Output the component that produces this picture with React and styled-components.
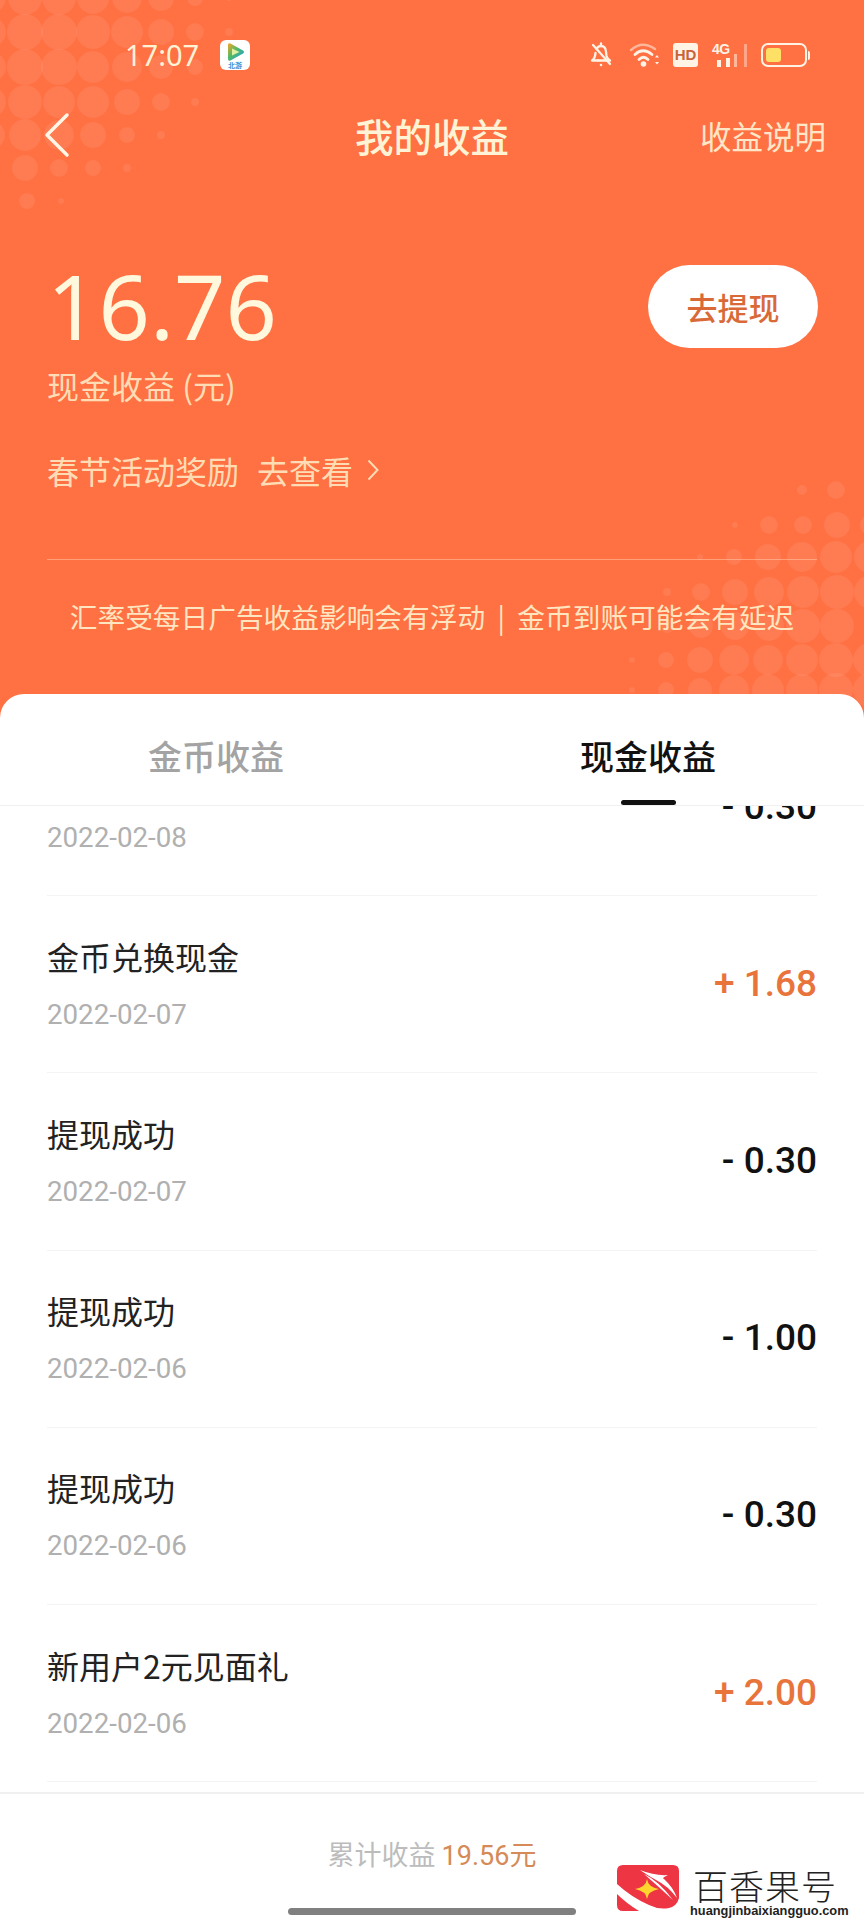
import React from 'react';
import styled, { createGlobalStyle } from 'styled-components';

const CREAM = '#fff3d6';
const ORANGE = '#ff7043';
const ICON = '#fff3e6';

const GlobalStyle = createGlobalStyle`
  html, body {
    margin: 0;
    padding: 0;
    background: #fff;
  }
  * {
    box-sizing: border-box;
  }
`;

const Page = styled.div`
  position: relative;
  width: 864px;
  height: 1920px;
  overflow: hidden;
  display: flex;
  flex-direction: column;
  background: ${ORANGE};
  font-family: "Noto Sans CJK SC", "Noto Sans", sans-serif;
`;
const Dots = styled.svg`
  position: absolute;
  top: 0;
  left: 0;
  pointer-events: none;
`;
const Header = styled.header`
  position: relative;
  height: 694px;
  flex: none;
  display: flex;
  flex-direction: column;
`;
const StatusBar = styled.div`
  height: 107px;
  padding: 3px 54px 0 125px;
  display: flex;
  align-items: center;
  justify-content: space-between;
`;
const StatusLeft = styled.div`
  display: flex;
  align-items: center;
  gap: 21px;
`;
const Time = styled.span`
  font-family: "Noto Sans", sans-serif;
  font-size: 29px;
  line-height: 36px;
  color: ${CREAM};
`;
const StatusIcons = styled.div`
  display: flex;
  align-items: center;
`;
const WifiIcon = styled.svg`
  margin-left: 17px;
`;
const Nav = styled.nav`
  height: 56px;
  padding: 0 38px;
  display: grid;
  grid-template-columns: 1fr auto 1fr;
  align-items: center;
`;
const BackIcon = styled.svg`
  margin-left: 6px;
`;
const NavTitle = styled.h1`
  margin: 0;
  font-size: 38.5px;
  line-height: 56px;
  font-weight: 500;
  color: ${CREAM};
`;
const NavLink = styled.span`
  justify-self: end;
  font-size: 31.5px;
  line-height: 44px;
  color: ${CREAM};
  opacity: 0.9;
`;
const Summary = styled.section`
  margin-top: 97px;
  padding: 0 46px 0 47px;
  display: flex;
  justify-content: space-between;
  align-items: flex-start;
`;
const Amount = styled.div`
  font-family: "Noto Sans", sans-serif;
  font-size: 90px;
  line-height: 90px;
  color: #fff8dc;
`;
const WithdrawButton = styled.button`
  width: 170px;
  height: 83px;
  margin-top: 5px;
  border: none;
  border-radius: 42px;
  background: #fff;
  font-family: inherit;
  font-size: 31px;
  font-weight: 500;
  color: #d96a38;
`;
const AmountLabel = styled.div`
  margin: 15px 0 0 47px;
  font-size: 32px;
  line-height: 40px;
  color: #ffdcb4;
`;
const Promo = styled.div`
  margin: 43px 0 0 47px;
  display: flex;
  align-items: center;
  font-size: 32px;
  line-height: 44px;
  color: #ffdcb4;
`;
const PromoLink = styled.span`
  margin-left: 18px;
`;
const PromoArrow = styled.svg`
  margin-left: 14px;
`;
const Divider = styled.div`
  margin: 67px 47px 0;
  height: 1px;
  background: rgba(255, 232, 200, 0.4);
`;
const Notice = styled.p`
  margin: 36px 0 0;
  font-size: 27.7px;
  line-height: 40px;
  text-align: center;
  white-space: pre;
  color: #ffe6c0;
`;
const Sheet = styled.main`
  position: relative;
  flex: 1;
  min-height: 0;
  display: flex;
  flex-direction: column;
  border-radius: 24px 24px 0 0;
  background: #fff;
`;
const Tabs = styled.div`
  height: 112px;
  flex: none;
  display: grid;
  grid-template-columns: 1fr 1fr;
  border-bottom: 1px solid #f0f0f0;
`;
const Tab = styled.div`
  position: relative;
  padding-top: 37px;
  text-align: center;
  font-size: 34px;
  line-height: 50px;
  font-weight: 500;
  color: ${(props) => (props.$active ? '#111' : '#a3a3a3')};
  ${(props) =>
    props.$active &&
    `&::after {
      content: '';
      position: absolute;
      left: 50%;
      bottom: 0;
      width: 55px;
      height: 5px;
      margin-left: -27px;
      border-radius: 3px;
      background: #111;
    }`}
`;
const List = styled.div`
  flex: 1;
  min-height: 0;
  overflow: hidden;
`;
// the list is scrolled: the first row sits partly under the tabs
const ListInner = styled.div`
  margin-top: -87px;
  padding: 0 47px;
`;
const Row = styled.div`
  height: 177.2px;
  padding-bottom: 2px;
  display: flex;
  align-items: center;
  justify-content: space-between;
  border-bottom: 1px solid #f4f4f4;
`;
const RowTitle = styled.div`
  min-height: 44px;
  font-size: 32px;
  line-height: 44px;
  color: #222;
`;
const RowDate = styled.div`
  margin-top: 19px;
  font-family: Roboto, sans-serif;
  font-size: 27.7px;
  line-height: 36px;
  color: #b0b0b0;
`;
const RowAmount = styled.div`
  font-family: Roboto, sans-serif;
  font-size: 37px;
  font-weight: 500;
  color: ${(props) => (props.$income ? '#e8743c' : '#111')};
  white-space: pre;
`;
const Footer = styled.footer`
  position: relative;
  height: 128px;
  flex: none;
  padding-top: 39px;
  border-top: 2px solid #f0f0f0;
  text-align: center;
  font-size: 27px;
  line-height: 42px;
  color: #bcbcbc;
`;
const FooterTotal = styled.span`
  margin-left: 6px;
  color: #d58a58;
`;
const FooterNumber = styled.span`
  font-family: Roboto, sans-serif;
`;
const HomeBar = styled.div`
  position: absolute;
  left: 288px;
  bottom: 5px;
  width: 288px;
  height: 7px;
  border-radius: 4px;
  background: #808080;
`;
const Watermark = styled.div`
  position: absolute;
  right: 10px;
  bottom: 0;
  height: 55px;
  display: flex;
  align-items: flex-start;
  gap: 11px;
  color: #222;
`;
const WatermarkText = styled.div`
  display: flex;
  flex-direction: column;
  align-items: flex-start;
  width: 164px;
`;
const WatermarkName = styled.div`
  margin: 2px 0 0 3px;
  font-size: 35px;
  line-height: 36px;
  font-weight: 300;
  letter-spacing: 1px;
`;
const WatermarkUrl = styled.div`
  font-family: "Liberation Sans", sans-serif;
  font-size: 12.8px;
  line-height: 16px;
  font-weight: 700;
  white-space: nowrap;
`;

// radii per row, x positions run on a 34px grid
const LEFT_DOTS = [
  { y: -2, x: -9, radii: [15, 17, 17, 16, 15, 13, 8, 3] },
  { y: 32, x: -9, radii: [15, 18, 18, 17, 16, 13, 9, 4] },
  { y: 67, x: -9, radii: [15, 18, 18, 16, 15, 12, 8] },
  { y: 102, x: -9, radii: [15, 17, 16, 16, 13, 9, 4] },
  { y: 135, x: -9, radii: [14, 16, 15, 13, 8, 4] },
  { y: 168, x: -9, radii: [9, 13, 9, 8, 4] },
  { y: 201, x: 27, radii: [8, 3] },
];
const RIGHT_DOTS = [
  { y: 490, x: 802, radii: [5, 9, 4] },
  { y: 525, x: 735, radii: [3, 9, 9, 13, 11] },
  { y: 557, x: 700, radii: [3, 8, 13, 15, 16, 16] },
  { y: 592, x: 667, radii: [4, 9, 13, 15, 16, 17, 17] },
  { y: 626, x: 667, radii: [7, 12, 14, 15, 17, 17] },
  { y: 660, x: 632, radii: [3, 8, 13, 15, 15, 16, 17, 17] },
  { y: 690, x: 632, radii: [3, 8, 12, 15, 16, 16, 17, 17] },
];

const DotField = ({ rows }) =>
  rows.flatMap((row) =>
    row.radii.map((r, i) => (
      <circle key={`${row.y}-${i}`} cx={row.x + i * 34} cy={row.y} r={r} fill="#fff" fillOpacity="0.08" />
    ))
  );

const AppIcon = () => (
  <svg width="30" height="30" viewBox="0 0 30 30">
    <defs>
      <linearGradient id="playOuter" x1="0" y1="0" x2="1" y2="1">
        <stop offset="0" stopColor="#f6a623" />
        <stop offset="0.45" stopColor="#4fb96a" />
        <stop offset="1" stopColor="#1f9be6" />
      </linearGradient>
    </defs>
    <rect width="30" height="30" rx="6" fill="#fff" />
    <path d="M8 5 Q8 2.500 10.500 3.500 L23 10.500 Q25 12 23 13.500 L10.500 20.500 Q8 21.500 8 19 Z" fill="url(#playOuter)" />
    <path d="M12 8.500 L19.500 12 L12 15.500 Z" fill="#dff0a0" />
    <text x="15" y="28" fontSize="7" textAnchor="middle" fontWeight="700" fill="#3c8fd6" fontFamily="Noto Sans CJK SC, sans-serif">北游</text>
  </svg>
);

const BellOff = () => (
  <svg width="22" height="26" viewBox="0 0 22 26" fill="none" stroke={ICON} strokeWidth="2.300" strokeLinecap="round" strokeLinejoin="round">
    <path d="M6.500 7 Q8 4 11 4 Q15.500 4 16 9.500 L16.500 14 Q17 16.500 20 18.500 L8 18.500" />
    <path d="M5.500 11 L5 14 Q4.500 17 2 18.500 L8 18.500" />
    <path d="M3 3 L20 22" />
    <path d="M11 1.500 V4" />
    <circle cx="11" cy="23" r="1.300" fill={ICON} stroke="none" />
  </svg>
);

const Wifi = () => (
  <WifiIcon width="32" height="26" viewBox="0 0 32 26" fill="none" strokeLinecap="round">
    <path d="M2 8 Q13 -2 26 7" stroke="#ffb79c" strokeWidth="2.400" />
    <path d="M6 12.500 Q14 5 23 12.500" stroke={ICON} strokeWidth="2.800" />
    <path d="M10 17.500 Q14.500 13 19 17.500" stroke={ICON} strokeWidth="2.800" />
    <circle cx="14.500" cy="22" r="2.800" fill={ICON} />
    <path d="M26 15.500 L28 13 L30 15.500 Z M26 20 L28 22.500 L30 20 Z" fill={ICON} />
  </WifiIcon>
);

const HdBadge = styled.span`
  width: 25px;
  height: 24px;
  margin-left: 12px;
  border-radius: 3px;
  background: ${ICON};
  font-family: "Liberation Sans", sans-serif;
  font-size: 15px;
  line-height: 24px;
  font-weight: 700;
  text-align: center;
  color: #c9643a;
`;
const Signal = styled.div`
  position: relative;
  width: 36px;
  height: 24px;
  margin-left: 14px;
`;
const SignalLabel = styled.span`
  position: absolute;
  top: -1px;
  left: 0;
  font-family: "Liberation Sans", sans-serif;
  font-size: 14px;
  line-height: 14px;
  font-weight: 700;
  letter-spacing: -0.5px;
  color: ${ICON};
`;
const SignalBars = styled.svg`
  position: absolute;
  top: 0;
  left: 0;
`;
const Battery = styled.div`
  width: 46px;
  height: 24px;
  margin-left: 13px;
  padding: 3px;
  border: 2px solid ${ICON};
  border-radius: 7px;
`;
const BatteryFill = styled.div`
  width: 15px;
  height: 100%;
  border-radius: 3px;
  background: #ffe066;
`;
const BatteryCap = styled.div`
  width: 2px;
  height: 9px;
  margin-left: 1px;
  border-radius: 0 2px 2px 0;
  background: ${ICON};
`;

const LogoMark = () => (
  <svg width="62" height="46" viewBox="0 0 62 46">
    <path d="M6 0 H56 Q62 0 62 6 V33 Q60 41 52 43 Q42 45 32 40 Q14 32 0 19 V6 Q0 0 6 0 Z" fill="#ed3544" />
    <path d="M0 29 Q9 38 22 46 H6 Q0 46 0 40 Z" fill="#ed3544" />
    <path d="M23 5 Q38 11 51 10 Q44 13 47 14 Q56 22 60 33 Q51 21 39 15 Q30 10 23 5 Z" fill="#fff" />
    <path d="M27 9 Q42 16 56 35 Q42 22 27 9 Z" fill="#fff" />
    <path d="M30 14 Q31 22 42 24 Q31 26 30 34 Q29 26 18 24 Q29 22 30 14 Z" fill="#ffd52e" />
  </svg>
);

const ROWS = [
  { title: '', date: '2022-02-08', amount: '- 0.30' },
  { title: '金币兑换现金', date: '2022-02-07', amount: '+ 1.68', income: true },
  { title: '提现成功', date: '2022-02-07', amount: '- 0.30' },
  { title: '提现成功', date: '2022-02-06', amount: '- 1.00' },
  { title: '提现成功', date: '2022-02-06', amount: '- 0.30' },
  { title: '新用户2元见面礼', date: '2022-02-06', amount: '+ 2.00', income: true },
  { title: '', date: '', amount: '' },
];

const App = () => (
  <Page>
    <GlobalStyle />
    <Dots width="864" height="720" viewBox="0 0 864 720">
      <DotField rows={LEFT_DOTS} />
      <DotField rows={RIGHT_DOTS} />
    </Dots>
    <Header>
      <StatusBar>
        <StatusLeft>
          <Time>17:07</Time>
          <AppIcon />
        </StatusLeft>
        <StatusIcons>
          <BellOff />
          <Wifi />
          <HdBadge>HD</HdBadge>
          <Signal>
            <SignalLabel>4G</SignalLabel>
            <SignalBars width="36" height="24" viewBox="0 0 36 24">
              <rect x="5" y="17" width="4" height="7" fill={ICON} />
              <rect x="14" y="15" width="4" height="9" fill={ICON} />
              <rect x="22" y="11" width="3" height="13" fill="#ffb79c" />
              <rect x="32" y="1" width="3" height="23" fill="#ffa589" />
            </SignalBars>
          </Signal>
          <Battery>
            <BatteryFill />
          </Battery>
          <BatteryCap />
        </StatusIcons>
      </StatusBar>
      <Nav>
        <BackIcon width="26" height="46" viewBox="0 0 26 46" fill="none" stroke="#fff6e6" strokeWidth="3.500" strokeLinecap="round" strokeLinejoin="round">
          <path d="M23 3 L3 23 L23 43" />
        </BackIcon>
        <NavTitle>我的收益</NavTitle>
        <NavLink>收益说明</NavLink>
      </Nav>
      <Summary>
        <Amount>16.76</Amount>
        <WithdrawButton>去提现</WithdrawButton>
      </Summary>
      <AmountLabel>现金收益 (元)</AmountLabel>
      <Promo>
        春节活动奖励
        <PromoLink>去查看</PromoLink>
        <PromoArrow width="12" height="22" viewBox="0 0 12 22" fill="none" stroke="#ffdcb4" strokeWidth="2">
          <path d="M1.500 1.500 L10.500 11 L1.500 20.500" />
        </PromoArrow>
      </Promo>
      <Divider />
      <Notice>汇率受每日广告收益影响会有浮动  |  金币到账可能会有延迟</Notice>
    </Header>
    <Sheet>
      <Tabs>
        <Tab>金币收益</Tab>
        <Tab $active>现金收益</Tab>
      </Tabs>
      <List>
        <ListInner>
          {ROWS.map((row, i) => (
            <Row key={i}>
              <div>
                <RowTitle>{row.title}</RowTitle>
                <RowDate>{row.date}</RowDate>
              </div>
              <RowAmount $income={row.income}>{row.amount}</RowAmount>
            </Row>
          ))}
        </ListInner>
      </List>
      <Footer>
        累计收益
        <FooterTotal>
          <FooterNumber>19.56</FooterNumber>元
        </FooterTotal>
        <HomeBar />
        <Watermark>
          <LogoMark />
          <WatermarkText>
            <WatermarkName>百香果号</WatermarkName>
            <WatermarkUrl>huangjinbaixiangguo.com</WatermarkUrl>
          </WatermarkText>
        </Watermark>
      </Footer>
    </Sheet>
  </Page>
);

export default App;
